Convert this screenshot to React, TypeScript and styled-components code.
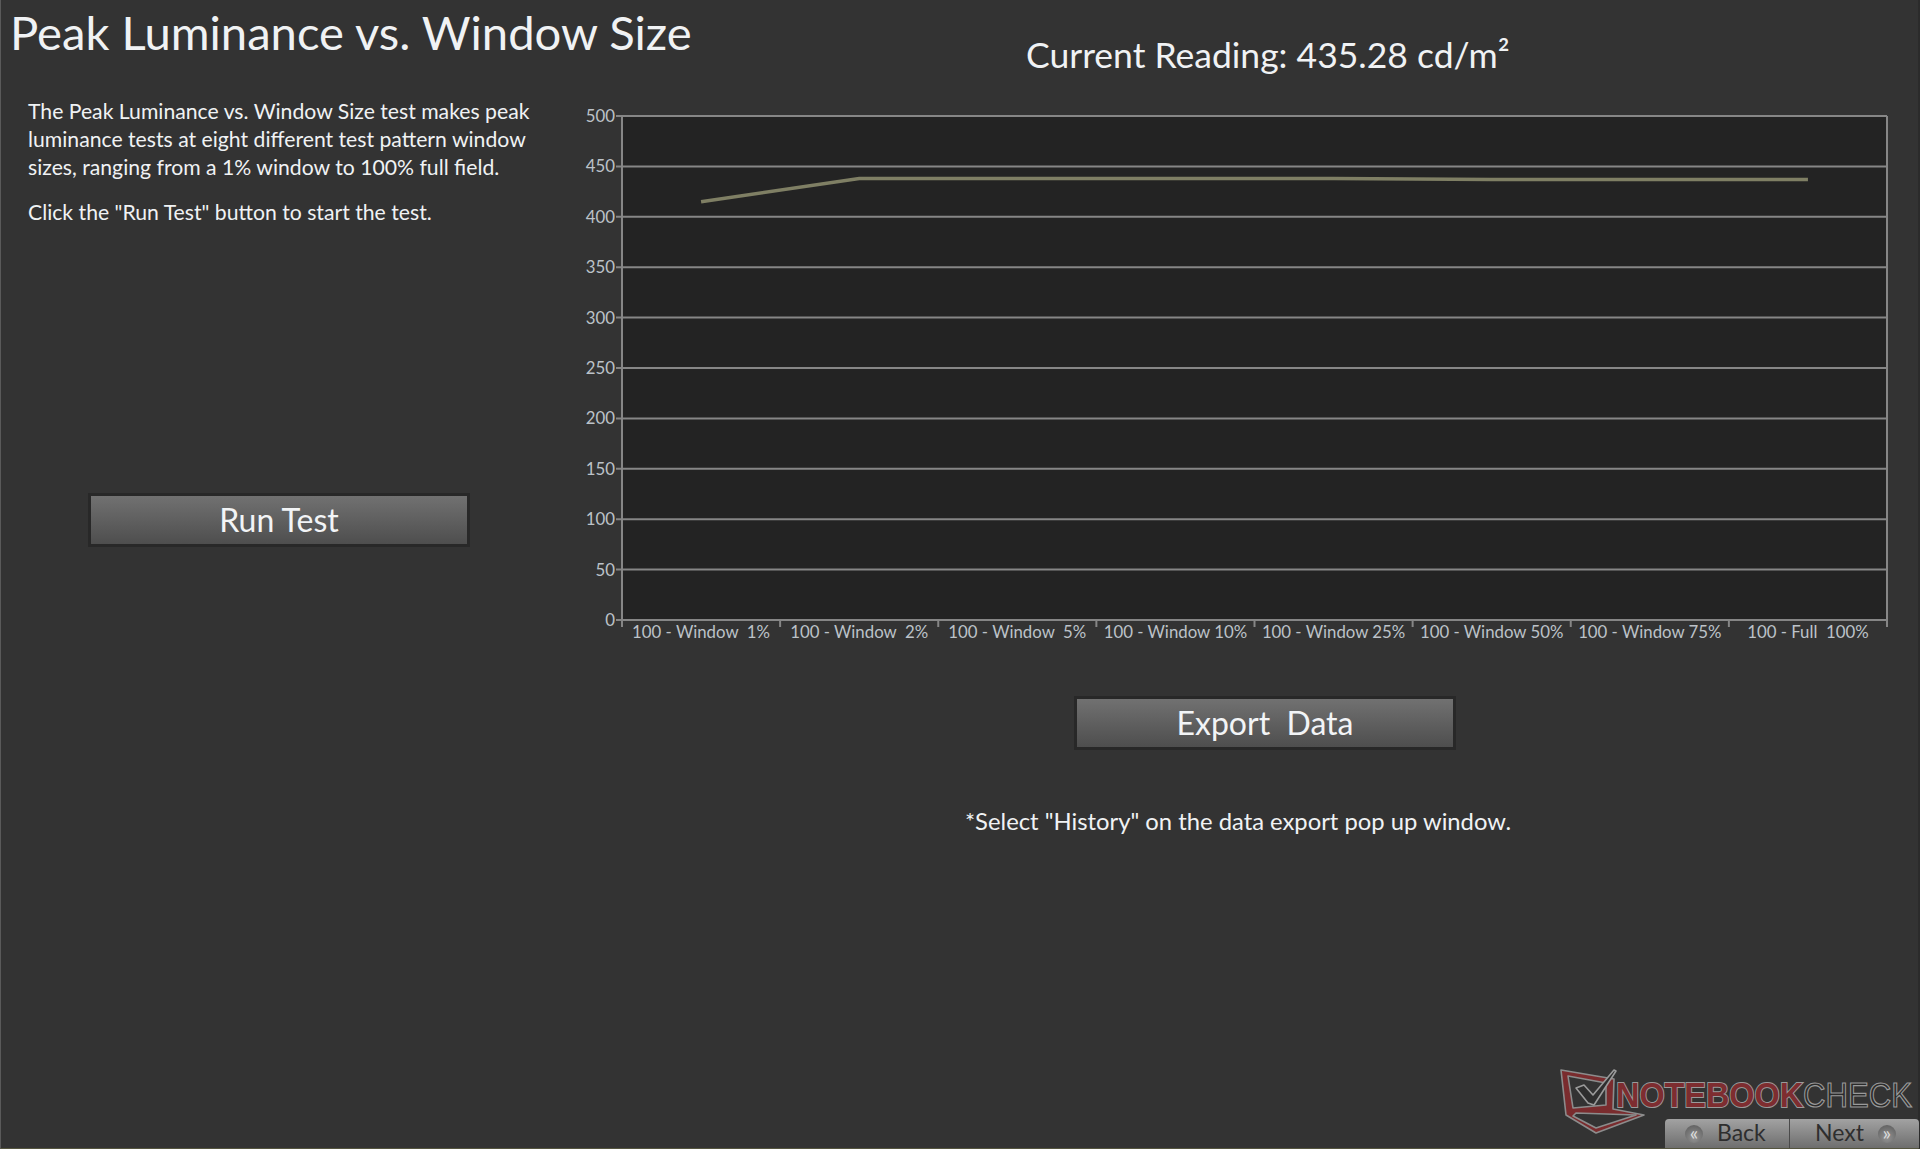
import styled, { createGlobalStyle } from "styled-components";

const GlobalStyle = createGlobalStyle`
  html, body {
    margin: 0;
    padding: 0;
    background: #333333;
  }
  body {
    font-family: Lato, "Open Sans", sans-serif;
    overflow: hidden;
  }
`;

const Page = styled.div`
  box-sizing: border-box;
  width: 1920px;
  height: 1149px;
  display: flex;
  flex-direction: column;
  background: #333333;
  border-left: 1px solid #5a5a5a;
  border-right: 2px solid #2b2b2b;
  border-bottom: 1px solid #55553f;
  color: #f0f2f4;
`;

const Main = styled.div`
  display: grid;
  grid-template-columns: 577px 1fr;
  flex: 1;
  min-height: 0;
`;

const LeftColumn = styled.section`
  display: flex;
  flex-direction: column;
`;

const RightColumn = styled.section`
  display: flex;
  flex-direction: column;
`;

const Title = styled.h1`
  margin: 0;
  padding: 4px 0 0 9px;
  font-size: 47.2px;
  line-height: 56px;
  font-weight: 400;
  white-space: nowrap;
`;

const Description = styled.div`
  margin-top: 37px;
  padding-left: 27px;
  font-size: 21.2px;
  line-height: 28px;
`;

const Paragraph = styled.p`
  margin: 0 0 17px;
  white-space: nowrap;
`;

const ActionButton = styled.button<{ $left: number; $top: number }>`
  display: block;
  box-sizing: border-box;
  width: 382px;
  height: 54px;
  margin: ${(p) => p.$top}px 0 0 ${(p) => p.$left}px;
  padding: 0;
  border: 3px solid #282828;
  background: linear-gradient(#717171, #4e4e4e);
  color: #f2f4f6;
  font-family: inherit;
  font-size: 32px;
  line-height: 46px;
`;

const Reading = styled.div`
  margin: 32px 0 0 448px;
  font-size: 35.5px;
  line-height: 46px;
  white-space: nowrap;
`;

const ChartWrap = styled.div`
  margin-top: 23px;
  height: 560px;
`;

const Note = styled.div`
  margin: 56px 0 0 387px;
  font-size: 23.8px;
  line-height: 30px;
  white-space: nowrap;
`;

const Footer = styled.footer`
  display: flex;
  flex-direction: column;
  align-items: flex-end;
  margin-right: -1px;
`;

const LogoSvg = styled.svg`
  display: block;
  margin: 0 3px -19px 0;
`;

const NavBar = styled.nav`
  display: flex;
  width: 254px;
  height: 29px;
  border-radius: 4px 4px 0 0;
  overflow: hidden;
  background: linear-gradient(#a2a2a2, #6e6e6e);
`;

const NavButton = styled.div<{ $pad: number; $divider?: boolean }>`
  box-sizing: border-box;
  flex: 1;
  display: flex;
  align-items: center;
  gap: 14px;
  padding: 0 0 3px ${(p) => p.$pad}px;
  border-right: ${(p) => (p.$divider ? "1px solid #4a4a4a" : "none")};
  color: #2e2e2e;
  font-size: 23px;
`;

const NavArrow = styled.span`
  width: 18px;
  height: 18px;
  margin-top: 3px;
  border-radius: 50%;
  background: radial-gradient(circle at 50% 70%, #949494, #585858);
  color: #dcdcdc;
  font-size: 20px;
  line-height: 14px;
  text-align: center;
`;

const PLOT = { left: 44, right: 1309, top: 15, bottom: 519 };
const TICK = "#868686";
const CATEGORIES = [
  "100 - Window  1%",
  "100 - Window  2%",
  "100 - Window  5%",
  "100 - Window 10%",
  "100 - Window 25%",
  "100 - Window 50%",
  "100 - Window 75%",
  "100 - Full  100%",
];
const READINGS = [415, 438, 438, 438, 438, 437, 437, 437];
const yOf = (v: number) =>
  PLOT.bottom - (v / 500) * (PLOT.bottom - PLOT.top);
const band = (PLOT.right - PLOT.left) / 8;

function Chart() {
  const ticks = Array.from({ length: 11 }, (_, i) => i * 50);
  const points = READINGS.map(
    (v, i) => `${PLOT.left + band * (i + 0.5)},${yOf(v)}`,
  ).join(" ");

  return (
    <svg width={1342} height={560} viewBox="0 0 1342 560">
      <rect
        x={PLOT.left}
        y={PLOT.top}
        width={PLOT.right - PLOT.left}
        height={PLOT.bottom - PLOT.top}
        fill="#232323"
      />
      {ticks.map((t) => (
        <g key={t}>
          <line
            x1={PLOT.left - 6}
            x2={PLOT.right}
            y1={yOf(t)}
            y2={yOf(t)}
            stroke={TICK}
            strokeWidth={2}
          />
          <text
            x={PLOT.left - 7}
            y={yOf(t) + 6}
            textAnchor="end"
            fontFamily="Lato"
            fontSize={16.8}
            fill="#bcc2c8"
          >
            {t}
          </text>
        </g>
      ))}
      <line
        x1={PLOT.left}
        x2={PLOT.left}
        y1={PLOT.top}
        y2={PLOT.bottom + 7}
        stroke={TICK}
        strokeWidth={2}
      />
      <line
        x1={PLOT.right}
        x2={PLOT.right}
        y1={PLOT.top}
        y2={PLOT.bottom + 7}
        stroke={TICK}
        strokeWidth={2}
      />
      {CATEGORIES.map((c, i) => (
        <g key={c}>
          <line
            x1={PLOT.left + band * i}
            x2={PLOT.left + band * i}
            y1={PLOT.bottom}
            y2={PLOT.bottom + 7}
            stroke={TICK}
            strokeWidth={2}
          />
          <text
            x={PLOT.left + band * (i + 0.5)}
            y={PLOT.bottom + 18}
            textAnchor="middle"
            fontFamily="Lato"
            fontSize={16.8}
            fill="#bcc2c8"
            style={{ whiteSpace: "pre" }}
          >
            {c}
          </text>
        </g>
      ))}
      <polyline points={points} fill="none" stroke="#7f7f64" strokeWidth={3.5} />
    </svg>
  );
}

function Logo() {
  return (
    <LogoSvg width={360} height={75} viewBox="0 0 360 75">
      <path
        d="M5 7 L58 16 L57 46 L88 52 L40 70 L10 52 Z M12 13 L50 20 L50 42 L17 45 Z M20 50 L80 52 L40 65 L17 53 Z"
        fill="#7a2c2e"
        fillRule="evenodd"
        stroke="#8c8c8c"
        strokeWidth={1.6}
        strokeLinejoin="round"
      />
      <path
        d="M20 25 L28 22 L37 32 L58 7 L60 8 L38 42 L32 40 Z"
        fill="#2e2e2e"
        stroke="#9a9a9a"
        strokeWidth={1.6}
        strokeLinejoin="round"
      />
      <g transform="translate(60 44) scale(0.9 1)">
        <text
          fontFamily="Liberation Sans"
          fontWeight={700}
          fontSize={36}
          fill="#7e2d30"
          stroke="#9a9a9a"
          strokeWidth={2}
          style={{ paintOrder: "stroke" }}
        >
          NOTEBOOK
        </text>
      </g>
      <g transform="translate(247 44) scale(0.865 1)">
        <text
          fontFamily="Liberation Sans"
          fontSize={36}
          fill="#2b2b2b"
          stroke="#9a9a9a"
          strokeWidth={1.2}
        >
          CHECK
        </text>
      </g>
    </LogoSvg>
  );
}

export default function App() {
  return (
    <Page>
      <GlobalStyle />
      <Main>
        <LeftColumn>
          <Title>Peak Luminance vs. Window Size</Title>
          <Description>
            <Paragraph>
              The Peak Luminance vs. Window Size test makes peak
              <br />
              luminance tests at eight different test pattern window
              <br />
              sizes, ranging from a 1% window to 100% full field.
            </Paragraph>
            <Paragraph>Click the "Run Test" button to start the test.</Paragraph>
          </Description>
          <ActionButton $left={87} $top={250}>
            Run Test
          </ActionButton>
        </LeftColumn>
        <RightColumn>
          <Reading>Current Reading: 435.28 cd/m²</Reading>
          <ChartWrap>
            <Chart />
          </ChartWrap>
          <ActionButton $left={496} $top={35}>
            Export&nbsp; Data
          </ActionButton>
          <Note>*Select "History" on the data export pop up window.</Note>
        </RightColumn>
      </Main>
      <Footer>
        <Logo />
        <NavBar>
          <NavButton $pad={20} $divider>
            <NavArrow>«</NavArrow>
            Back
          </NavButton>
          <NavButton $pad={25}>
            Next
            <NavArrow>»</NavArrow>
          </NavButton>
        </NavBar>
      </Footer>
    </Page>
  );
}
